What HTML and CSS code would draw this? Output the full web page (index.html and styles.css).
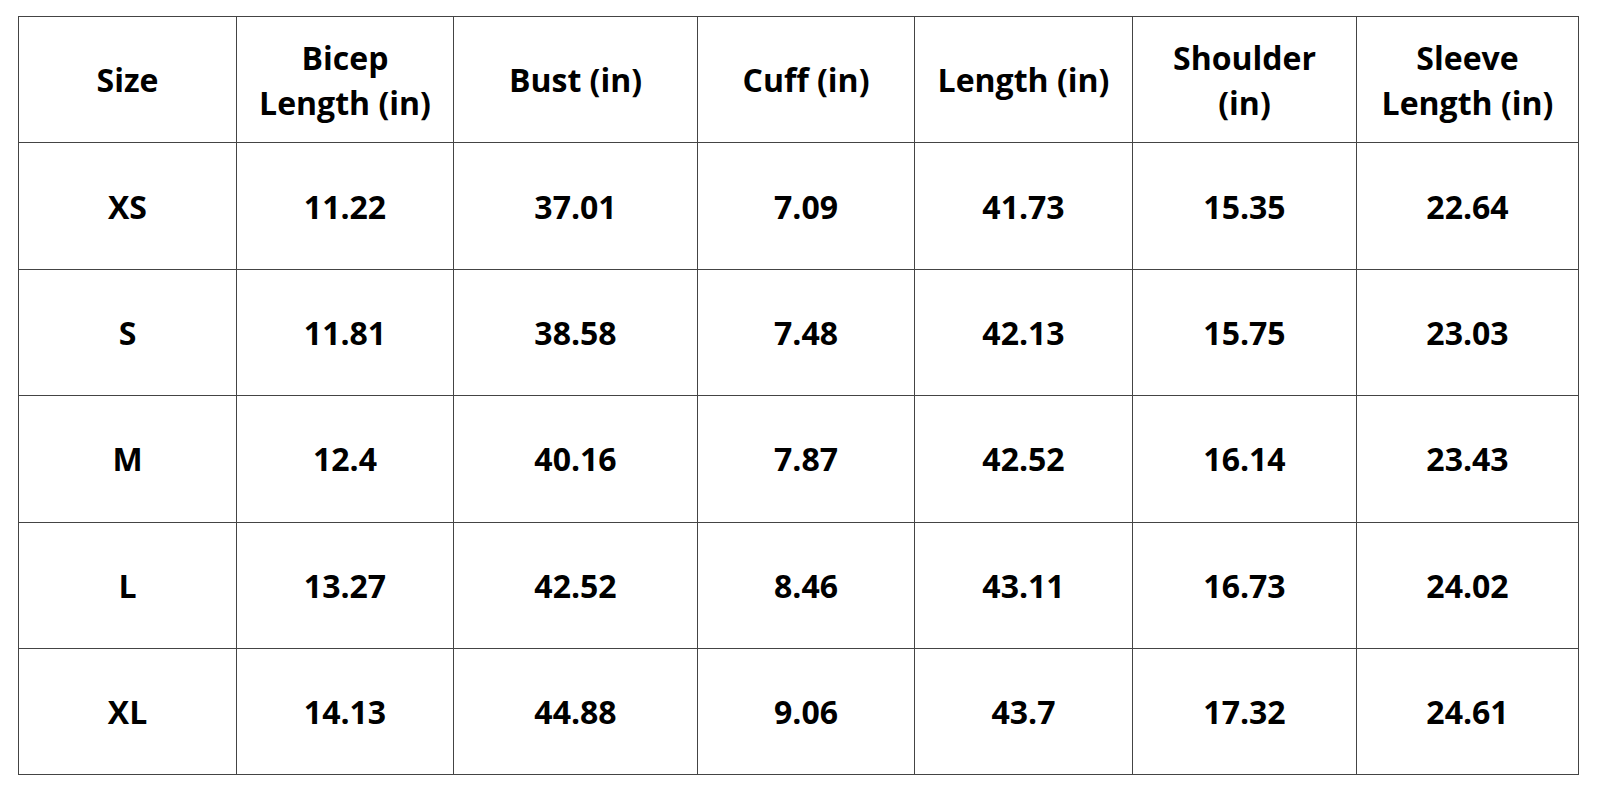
FILE: index.html
```html
<!DOCTYPE html>
<html>
<head>
<meta charset="utf-8">
<link rel="stylesheet" href="styles.css">
</head>
<body>
<div class="page">
<table class="sizes">
<colgroup>
<col class="c1"><col class="c2"><col class="c3"><col class="c4"><col class="c5"><col class="c6"><col class="c7">
</colgroup>
<tr><td>Size</td><td>Bicep<br>Length (in)</td><td>Bust (in)</td><td>Cuff (in)</td><td>Length (in)</td><td>Shoulder<br>(in)</td><td>Sleeve<br>Length (in)</td></tr>
<tr><td>XS</td><td>11.22</td><td>37.01</td><td>7.09</td><td>41.73</td><td>15.35</td><td>22.64</td></tr>
<tr><td>S</td><td>11.81</td><td>38.58</td><td>7.48</td><td>42.13</td><td>15.75</td><td>23.03</td></tr>
<tr><td>M</td><td>12.4</td><td>40.16</td><td>7.87</td><td>42.52</td><td>16.14</td><td>23.43</td></tr>
<tr><td>L</td><td>13.27</td><td>42.52</td><td>8.46</td><td>43.11</td><td>16.73</td><td>24.02</td></tr>
<tr><td>XL</td><td>14.13</td><td>44.88</td><td>9.06</td><td>43.7</td><td>17.32</td><td>24.61</td></tr>
</table>
</div>
</body>
</html>
```
FILE: styles.css
```css
html, body { margin: 0; padding: 0; background: #fff; }
.page { padding: 16px 0 0 18px; }
.sizes {
  border-collapse: collapse;
  table-layout: fixed;
  width: 1561px;
  font-family: "Open Sans", sans-serif;
  font-weight: 700;
  font-size: 32px;
  line-height: 45px;
  color: #000;
}
.sizes td {
  border: 1px solid #444;
  height: 125.4px;
  padding: 0;
  text-align: center;
  vertical-align: middle;
}
.c1 { width: 218px; }
.c2 { width: 217px; }
.c3 { width: 244px; }
.c4 { width: 217px; }
.c5 { width: 218px; }
.c6 { width: 224px; }
.c7 { width: 222px; }
```
